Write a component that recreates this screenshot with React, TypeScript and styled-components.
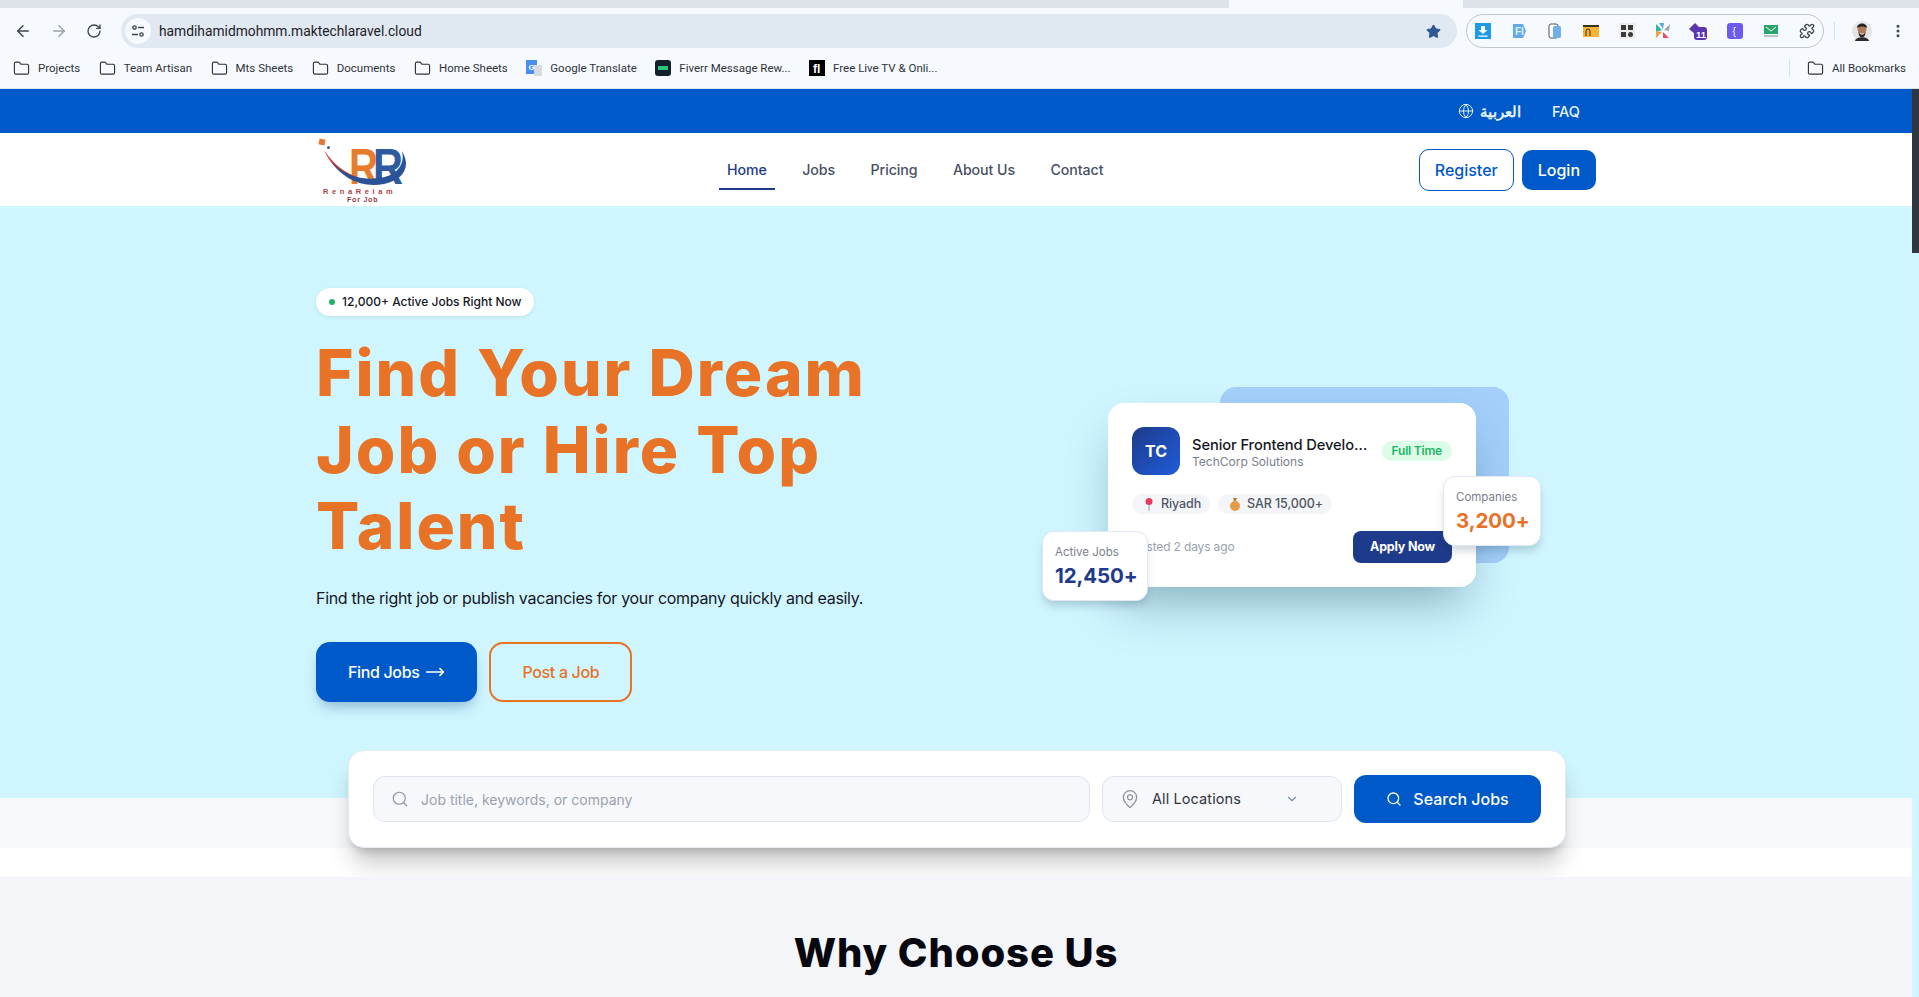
import styled, { createGlobalStyle } from 'styled-components';
import { Search, MapPin, ChevronDown, Globe, ArrowLeft, ArrowRight, MoveRight, RotateCw, Star, MoreVertical, Folder, Puzzle } from 'lucide-react';

const ui = '"Inter", "Noto Sans", sans-serif';
const head = '"Inter", "Open Sans", sans-serif';
const chrome = '"Roboto", "Liberation Sans", sans-serif';

const GlobalStyle = createGlobalStyle`
  html, body { margin: 0; height: 100%; overflow: hidden; background: #fff; }
  * { box-sizing: border-box; }
`;

const Screen = styled.div`
  height: 997px;
  display: flex;
  flex-direction: column;
  overflow: hidden;
`;

/* browser chrome */
const TabStrip = styled.div`
  height: 8px;
  flex: none;
  background: #dee3ea;
  display: flex;
`;
const TabGap = styled.div`
  width: 234px;
  margin-left: 1229px;
  background: #f6f9fe;
`;
const Toolbar = styled.div`
  height: 44px;
  flex: none;
  background: #f6f9fe;
  display: flex;
  align-items: center;
  padding: 2px 0 0 14px;
  color: #3f4650;
`;
const NavIcon = styled.span<{ $dim?: boolean }>`
  width: 18px;
  margin-right: 18px;
  display: flex;
  color: ${(p) => (p.$dim ? '#9aa1aa' : '#3f4650')};
`;
const AddressBar = styled.div`
  width: 1336px;
  margin-left: -1px;
  height: 34px;
  border-radius: 17px;
  background: #e0e9f2;
  display: flex;
  align-items: center;
  padding: 0 16px 0 4px;
  font: 400 13.8px ${chrome};
  color: #1d2026;
`;
const SiteInfo = styled.span`
  width: 26px;
  height: 26px;
  border-radius: 50%;
  background: #f6f9fe;
  display: flex;
  align-items: center;
  justify-content: center;
  margin-right: 8px;
`;
const Url = styled.span`
  flex: 1;
`;
const ExtPill = styled.div`
  width: 358px;
  height: 34px;
  margin-left: 9px;
  border: 1px solid #c1c5cc;
  border-radius: 17px;
  display: flex;
  align-items: center;
`;
const ExtSlot = styled.span`
  width: 36px;
  flex: none;
  display: flex;
  justify-content: center;
  &:first-child {
    margin-left: -2px;
  }
`;
const ToolSep = styled.span`
  width: 1px;
  height: 18px;
  background: #c8e8f2;
  margin-left: 10px;
  margin-right: 17px;
`;
const Avatar = styled.span`
  width: 20px;
  height: 20px;
  display: flex;
  margin-right: 18px;
`;
const BookmarkBar = styled.div`
  height: 37px;
  flex: none;
  background: #f6f9fe;
  border-bottom: 1px solid #dbe3ea;
  display: flex;
  align-items: center;
  padding: 0 13px 4px 13px;
  font: 400 11.5px ${chrome};
  color: #30343a;
  gap: 18.5px;
`;
const Bookmark = styled.span`
  display: flex;
  align-items: center;
  gap: 8px;
  white-space: nowrap;
`;
const BookmarkEnd = styled.div`
  margin-left: auto;
  display: flex;
  align-items: center;
  gap: 17px;
`;
const BarSep = styled.span`
  width: 1px;
  height: 18px;
  background: #c8e8f2;
`;

/* page */
const Viewport = styled.div`
  flex: 1;
  min-height: 0;
  display: flex;
  font-family: ${ui};
`;
const Page = styled.div`
  flex: 1;
  min-width: 0;
  display: flex;
  flex-direction: column;
`;
const ScrollTrack = styled.div`
  width: 7px;
  flex: none;
  background: #d0f5ff;
`;
const ScrollThumb = styled.div`
  height: 164px;
  background: #2f3640;
`;
const TopBar = styled.div`
  height: 44px;
  flex: none;
  background: #0059c9;
  color: #e4f2ff;
  display: flex;
  justify-content: center;
`;
const Container = styled.div`
  width: 1280px;
`;
const TopBarInner = styled(Container)`
  display: flex;
  justify-content: flex-end;
  align-items: center;
  gap: 31px;
  padding-right: 16px;
  font-size: 14.5px;
  font-weight: 500;
`;
const LangLink = styled.span`
  display: flex;
  align-items: center;
  gap: 6px;
  font-weight: 600;
`;
const NavBar = styled.div`
  height: 73px;
  flex: none;
  background: #fff;
  display: flex;
  justify-content: center;
`;
const NavInner = styled(Container)`
  display: flex;
  align-items: center;
  position: relative;
`;
const NavLinks = styled.nav`
  display: flex;
  gap: 19.5px;
  margin-left: 311px;
`;
const NavLink = styled.span<{ $active?: boolean }>`
  height: 38px;
  margin-top: 2px;
  padding: 0 8px;
  display: flex;
  align-items: center;
  font-size: 14.2px;
  font-weight: 500;
  letter-spacing: -0.08px;
  color: ${(p) => (p.$active ? '#1e3a8a' : '#475064')};
  border-bottom: 2px solid ${(p) => (p.$active ? '#1e3a8a' : 'transparent')};
`;
const NavActions = styled.div`
  margin-left: auto;
  display: flex;
  align-items: center;
  gap: 8px;
`;
const NavButton = styled.span<{ $filled?: boolean }>`
  height: ${(p) => (p.$filled ? '40px' : '42px')};
  padding: 0 ${(p) => (p.$filled ? '16px' : '15px')};
  border-radius: 10px;
  display: flex;
  align-items: center;
  font-size: 16px;
  font-weight: 500;
  color: ${(p) => (p.$filled ? '#fff' : '#0059c9')};
  background: ${(p) => (p.$filled ? '#0059c9' : '#fff')};
  border: ${(p) => (p.$filled ? 'none' : '1px solid #0059c9')};
`;

/* hero */
const Hero = styled.section`
  background: #cff5ff;
  padding: 82px 0 96px;
  display: flex;
  justify-content: center;
  flex: none;
`;
const HeroGrid = styled(Container)`
  display: grid;
  grid-template-columns: 1fr 1fr;
  gap: 64px;
  align-items: center;
`;
const Pill = styled.div`
  display: flex;
  width: fit-content;
  align-items: center;
  height: 28px;
  padding: 0 12px 1px 13px;
  gap: 7px;
  border-radius: 14px;
  background: #fff;
  box-shadow: 0 1px 4px rgba(0, 0, 0, 0.08);
  font-size: 12px;
  font-weight: 500;
  color: #14171f;
`;
const Dot = styled.span`
  width: 6px;
  height: 6px;
  border-radius: 50%;
  background: #22b566;
`;
const Title = styled.h1`
  margin: 19px 0 0;
  font: 800 64px/76.5px ${head};
  letter-spacing: 2px;
  color: #e87225;
`;
const Lead = styled.p`
  margin: 20px 0 0;
  font-size: 16px;
  line-height: 26px;
  letter-spacing: -0.3px;
  color: #14171f;
`;
const Actions = styled.div`
  margin-top: 31px;
  display: flex;
  gap: 12px;
`;
const CtaButton = styled.span<{ $outline?: boolean }>`
  height: 60px;
  padding: 0 ${(p) => (p.$outline ? '31px' : '32px')};
  border-radius: 14px;
  display: flex;
  align-items: center;
  gap: 6px;
  font-size: 16px;
  font-weight: 500;
  letter-spacing: -0.35px;
  color: ${(p) => (p.$outline ? '#e87225' : '#fff')};
  background: ${(p) => (p.$outline ? 'transparent' : '#0059c9')};
  border: ${(p) => (p.$outline ? '2px solid #e87225' : 'none')};
  box-shadow: ${(p) => (p.$outline ? 'none' : '0 8px 14px -4px rgba(0, 60, 120, 0.35)')};
`;
const Visual = styled.div`
  display: flex;
  justify-content: center;
`;
const CardStage = styled.div`
  width: 368px;
  position: relative;
`;
const BackPanel = styled.div`
  position: absolute;
  top: -16px;
  left: 112px;
  width: 289px;
  height: 176px;
  border-radius: 16px;
  background: #a3cffa;
`;
const JobCard = styled.div`
  position: relative;
  height: 184px;
  padding: 24px;
  border-radius: 16px;
  background: #fff;
  box-shadow: 0 25px 50px -12px rgba(0, 50, 70, 0.38);
`;
const CardHead = styled.div`
  display: flex;
  align-items: center;
`;
const CompanyLogo = styled.div`
  width: 48px;
  height: 48px;
  flex: none;
  border-radius: 12px;
  background: linear-gradient(135deg, #1e3a8a, #1f5cdb);
  color: #fff;
  font-size: 16px;
  font-weight: 700;
  display: flex;
  align-items: center;
  justify-content: center;
`;
const JobText = styled.div`
  width: 177px;
  margin-left: 12px;
  padding-top: 4px;
`;
const JobTitle = styled.div`
  font-size: 14.7px;
  line-height: 18px;
  font-weight: 500;
  letter-spacing: -0.1px;
  color: #14171f;
  white-space: nowrap;
  overflow: hidden;
  text-overflow: ellipsis;
`;
const JobCompany = styled.div`
  font-size: 12px;
  line-height: 16px;
  color: #7a808c;
`;
const TypeBadge = styled.span`
  margin-left: auto;
  height: 20px;
  padding: 0 10px;
  border-radius: 10px;
  background: #dcfce7;
  color: #22b566;
  font-size: 12px;
  font-weight: 600;
  letter-spacing: -0.2px;
  white-space: nowrap;
  display: flex;
  align-items: center;
`;
const Tags = styled.div`
  display: flex;
  gap: 8px;
  margin-top: 19px;
`;
const Tag = styled.span`
  height: 20px;
  padding: 0 9px 0 10px;
  border-radius: 10px;
  background: #f3f5f9;
  color: #4f5563;
  font-size: 12.5px;
  font-weight: 500;
  letter-spacing: -0.1px;
  display: flex;
  align-items: center;
  gap: 5px;
`;
const CardFoot = styled.div`
  display: flex;
  align-items: center;
  justify-content: space-between;
  margin-top: 17px;
`;
const Posted = styled.span`
  font-size: 12px;
  letter-spacing: -0.15px;
  color: #9ba1ad;
`;
const ApplyButton = styled.span`
  height: 32px;
  width: 99px;
  border-radius: 8px;
  background: #1e3a8a;
  color: #fff;
  font-size: 12.5px;
  font-weight: 700;
  letter-spacing: -0.2px;
  display: flex;
  align-items: center;
  justify-content: center;
`;
const StatCard = styled.div<{ $side: 'left' | 'right' }>`
  position: absolute;
  ${(p) => (p.$side === 'left' ? 'left: -66px; top: 128px; width: 106px;' : 'right: -65px; top: 73px; width: 98px;')}
  height: 70px;
  padding: 13px 12px;
  border-radius: 12px;
  background: #fff;
  border: 1px solid #e3e8f2;
  box-shadow: 0 6px 10px -2px rgba(0, 40, 60, 0.22);
`;
const StatLabel = styled.div`
  font-size: 11.5px;
  line-height: 15px;
  color: #7a808c;
`;
const StatValue = styled.div<{ $orange?: boolean }>`
  margin-top: 3px;
  font-size: 20.5px;
  line-height: 26px;
  font-weight: 700;
  letter-spacing: -0.1px;
  white-space: nowrap;
  color: ${(p) => (p.$orange ? '#e87225' : '#1e3a8a')};
`;

/* search */
const SearchBand = styled.div`
  height: 50px;
  flex: none;
  background: #f8f9fd;
`;
const WhiteBand = styled.div`
  height: 29px;
  flex: none;
  background: #fff;
`;
const SearchHolder = styled.div`
  position: relative;
  height: 0;
  flex: none;
  display: flex;
  justify-content: center;
`;
const SearchCard = styled.div`
  width: 1218px;
  height: 98px;
  margin: -48px 0 0 2px;
  padding: 24px;
  display: flex;
  align-items: center;
  gap: 12px;
  border-radius: 16px;
  background: #fff;
  border: 1px solid #e6ebf2;
  box-shadow: 0 20px 25px -5px rgba(0, 0, 0, 0.22), 0 8px 10px -6px rgba(0, 0, 0, 0.2);
`;
const Field = styled.div<{ $grow?: boolean }>`
  height: 46px;
  ${(p) => (p.$grow ? 'flex: 1;' : 'width: 240px;')}
  padding: 0 16px 0 17px;
  border-radius: 12px;
  background: #f6f8fc;
  border: 1px solid #dfe6f0;
  display: flex;
  align-items: center;
  gap: 12px;
  font-size: 14px;
`;
const Placeholder = styled.span`
  color: #9ba1ad;
  padding-top: 2px;
`;
const SelectValue = styled.span`
  flex: 1;
  font-size: 14.5px;
  letter-spacing: 0.1px;
  color: #30343a;
`;
const SelectCaret = styled.span`
  display: flex;
  margin-right: 26px;
`;
const SearchButton = styled.span`
  width: 187px;
  height: 48px;
  flex: none;
  border-radius: 12px;
  background: #0059c9;
  color: #fff;
  font-size: 16px;
  font-weight: 500;
  display: flex;
  align-items: center;
  justify-content: center;
  gap: 11px;
`;

/* why choose us */
const WhySection = styled.section`
  position: relative;
  flex: 1;
  background: #f3f5f9;
  padding-top: 48px;
  text-align: center;
`;
const WhyTitle = styled.h2`
  margin: 0;
  font: 800 40px/56px ${head};
  letter-spacing: 0.9px;
  color: #07070f;
`;

const bookmarks = ['Projects', 'Team Artisan', 'Mts Sheets', 'Documents', 'Home Sheets'];

function Logo() {
  return (
    <svg width="92" height="72" viewBox="16 8 92 72">
      <rect x="19" y="13" width="6" height="6" fill="#e8772e" transform="rotate(12 22 16)" />
      <circle cx="28.500" cy="21.500" r="1.500" fill="#2f5fa8" />
      <text x="49" y="58" fontFamily="Liberation Sans" fontWeight="700" fontSize="50" fill="#e87c2d" textLength="29" lengthAdjust="spacingAndGlyphs">R</text>
      <text x="73" y="58" fontFamily="Liberation Sans" fontWeight="700" fontSize="50" fill="#2f5a9e" textLength="30" lengthAdjust="spacingAndGlyphs">R</text>
      <path d="M24 24 C36 42 50 50 70 55 C52 57 34 46 24 24Z" fill="#d8403a" />
      <path d="M30 34 C42 52 60 62 84 58 C102 54 112 42 102 25 C106 42 92 51 78 52 C60 55 42 48 30 34Z" fill="#2a5298" />
      <text x="23" y="68" fontFamily="Liberation Sans" fontWeight="700" fontSize="7.500" fill="#a8434a" letterSpacing="3.600">RenaReiam</text>
      <text x="47" y="76" fontFamily="Liberation Sans" fontWeight="700" fontSize="7" fill="#8f3a40" letterSpacing="0.8">For Job</text>
    </svg>
  );
}

function Extensions() {
  return (
    <>
      <ExtSlot>
        <svg width="16" height="16" viewBox="0 0 16 16"><rect width="16" height="16" fill="#1e9be8" /><path d="M6 3h4v4h2.500L8 11 3.500 7H6zM3.500 12.500h9v1.200h-9z" fill="#fff" /></svg>
      </ExtSlot>
      <ExtSlot>
        <svg width="16" height="16" viewBox="0 0 16 16"><path d="M2 1h10l3 7-3 7H2z" fill="#62a9ea" /><text x="4" y="12" fontSize="10" fontFamily="Liberation Sans" fontWeight="700" fill="#dff0ff">FI</text></svg>
      </ExtSlot>
      <ExtSlot>
        <svg width="14" height="16" viewBox="0 0 14 16"><rect x="1" y="1" width="9" height="14" rx="2" fill="#fff" stroke="#4a5360" /><rect x="5" y="3" width="8" height="12" rx="1.500" fill="#6fb0ec" /></svg>
      </ExtSlot>
      <ExtSlot>
        <svg width="16" height="12" viewBox="0 0 16 12"><rect width="16" height="12" fill="#f6b436" /><rect width="16" height="2" fill="#3a3020" /><path d="M3 11V6a2 2 0 0 1 4 0v5" fill="none" stroke="#3a3020" /></svg>
      </ExtSlot>
      <ExtSlot>
        <svg width="16" height="16" viewBox="0 0 16 16"><rect width="16" height="16" fill="#ececec" /><path d="M2 2h5v5H2zM9 2h5v5H9zM2 9h5v5H2z" fill="#3a3a3a" /><circle cx="11.500" cy="11.500" r="2.500" fill="#3a3a3a" /></svg>
      </ExtSlot>
      <ExtSlot>
        <svg width="16" height="16" viewBox="0 0 16 16"><path d="M1 1l6 6-6 2z" fill="#2fb5a5" /><path d="M4 0h5L8 6z" fill="#5aa8e8" /><path d="M15 1l-6 6 5 1z" fill="#a0a6b0" /><path d="M1 15l6-6-6-1z" fill="#f2a23a" /><path d="M8 9l6 6H8z" fill="#e84a6a" /></svg>
      </ExtSlot>
      <ExtSlot>
        <svg width="22" height="18" viewBox="0 0 22 18"><path d="M1 7l6-6 6 6-6 5z" fill="#5b34b0" /><rect x="6" y="5" width="13" height="13" rx="3" fill="#5b34b0" /><text x="8" y="15.500" fontSize="9.500" fontFamily="Liberation Sans" fontWeight="700" fill="#fff">11</text></svg>
      </ExtSlot>
      <ExtSlot>
        <svg width="16" height="16" viewBox="0 0 16 16"><rect width="16" height="16" rx="3" fill="#6d5af0" /><text x="5.500" y="12" fontSize="10" fontFamily="Liberation Sans" fill="#fff">{'{'}</text></svg>
      </ExtSlot>
      <ExtSlot>
        <svg width="14" height="12" viewBox="0 0 14 12"><rect width="14" height="9" fill="#2aa56a" /><path d="M2 2l5 4 5-4" fill="none" stroke="#fff" /><rect y="10" width="14" height="2" fill="#b8c4c0" /></svg>
      </ExtSlot>
      <ExtSlot>
        <Puzzle size={16} color="#3f4650" strokeWidth={2} />
      </ExtSlot>
    </>
  );
}

export default function App() {
  return (
    <Screen>
      <GlobalStyle />
      <TabStrip>
        <TabGap />
      </TabStrip>
      <Toolbar>
        <NavIcon><ArrowLeft size={18} /></NavIcon>
        <NavIcon $dim><ArrowRight size={18} /></NavIcon>
        <NavIcon><RotateCw size={16} /></NavIcon>
        <AddressBar>
          <SiteInfo>
            <svg width="14" height="14" viewBox="0 0 14 14" fill="none" stroke="#3f4650" strokeWidth="1.300">
              <circle cx="3.500" cy="3.500" r="1.700" /><path d="M7 3.500h6M1 10.500h6" /><circle cx="10.500" cy="10.500" r="1.700" />
            </svg>
          </SiteInfo>
          <Url>hamdihamidmohmm.maktechlaravel.cloud</Url>
          <Star size={15} fill="#2d5a94" color="#2d5a94" />
        </AddressBar>
        <ExtPill>
          <Extensions />
        </ExtPill>
        <ToolSep />
        <Avatar>
          <svg width="20" height="20" viewBox="0 0 20 20">
            <circle cx="10" cy="10" r="10" fill="#e4e4e4" />
            <circle cx="10" cy="8" r="4.500" fill="#b07a56" />
            <path d="M5 7c0-6 10-6 10 0-3-2-7-2-10 0z" fill="#222" />
            <path d="M6.500 10c1 5 6 5 7 0 0 6-2 6-3.500 6s-3.500 0-3.500-6z" fill="#2b2320" />
            <path d="M3 20c1-5 13-5 14 0z" fill="#2a2a30" />
          </svg>
        </Avatar>
        <MoreVertical size={16} color="#3f4650" strokeWidth={2.500} />
      </Toolbar>
      <BookmarkBar>
        {bookmarks.map((name) => (
          <Bookmark key={name}><Folder size={17} strokeWidth={1.600} />{name}</Bookmark>
        ))}
        <Bookmark>
          <svg width="16" height="16" viewBox="0 0 16 16"><rect width="11" height="14" fill="#4a8ef0" /><rect x="8" y="5" width="8" height="11" fill="#d8dbe0" /><text x="2.500" y="10" fontSize="8" fontFamily="Liberation Sans" fontWeight="700" fill="#fff">G</text></svg>
          Google Translate
        </Bookmark>
        <Bookmark>
          <svg width="16" height="16" viewBox="0 0 16 16"><rect width="16" height="16" rx="3" fill="#14202a" /><rect x="3" y="6" width="10" height="4" fill="#2fc47a" /></svg>
          Fiverr Message Rew...
        </Bookmark>
        <Bookmark>
          <svg width="16" height="16" viewBox="0 0 16 16"><rect width="16" height="16" fill="#000" /><text x="4" y="13" fontSize="12" fontFamily="Liberation Sans" fontWeight="700" fill="#fff">fl</text></svg>
          Free Live TV &amp; Onli...
        </Bookmark>
        <BookmarkEnd>
          <BarSep />
          <Bookmark><Folder size={17} strokeWidth={1.600} />All Bookmarks</Bookmark>
        </BookmarkEnd>
      </BookmarkBar>
      <Viewport>
        <Page>
          <TopBar>
            <TopBarInner>
              <LangLink><Globe size={16} strokeWidth={1.500} />العربية</LangLink>
              <span>FAQ</span>
            </TopBarInner>
          </TopBar>
          <NavBar>
            <NavInner>
              <Logo />
              <NavLinks>
                <NavLink $active>Home</NavLink>
                <NavLink>Jobs</NavLink>
                <NavLink>Pricing</NavLink>
                <NavLink>About Us</NavLink>
                <NavLink>Contact</NavLink>
              </NavLinks>
              <NavActions>
                <NavButton>Register</NavButton>
                <NavButton $filled>Login</NavButton>
              </NavActions>
            </NavInner>
          </NavBar>
          <Hero>
            <HeroGrid>
              <div>
                <Pill><Dot />12,000+ Active Jobs Right Now</Pill>
                <Title>Find Your Dream<br />Job or Hire Top<br />Talent</Title>
                <Lead>Find the right job or publish vacancies for your company quickly and easily.</Lead>
                <Actions>
                  <CtaButton>Find Jobs <MoveRight size={20} /></CtaButton>
                  <CtaButton $outline>Post a Job</CtaButton>
                </Actions>
              </div>
              <Visual>
                <CardStage>
                  <BackPanel />
                  <JobCard>
                    <CardHead>
                      <CompanyLogo>TC</CompanyLogo>
                      <JobText>
                        <JobTitle>Senior Frontend Developer</JobTitle>
                        <JobCompany>TechCorp Solutions</JobCompany>
                      </JobText>
                      <TypeBadge>Full Time</TypeBadge>
                    </CardHead>
                    <Tags>
                      <Tag>
                        <svg width="14" height="14" viewBox="0 0 14 14"><circle cx="7" cy="4.500" r="3.500" fill="#e83a5e" /><path d="M7 8v6" stroke="#9aa1aa" /></svg>
                        Riyadh
                      </Tag>
                      <Tag>
                        <svg width="14" height="14" viewBox="0 0 14 14"><circle cx="7" cy="9" r="5" fill="#e89a4a" /><path d="M5 1h4L8 4H6z" fill="#c9762e" /></svg>
                        SAR 15,000+
                      </Tag>
                    </Tags>
                    <CardFoot>
                      <Posted>Posted 2 days ago</Posted>
                      <ApplyButton>Apply Now</ApplyButton>
                    </CardFoot>
                  </JobCard>
                  <StatCard $side="left">
                    <StatLabel>Active Jobs</StatLabel>
                    <StatValue>12,450+</StatValue>
                  </StatCard>
                  <StatCard $side="right">
                    <StatLabel>Companies</StatLabel>
                    <StatValue $orange>3,200+</StatValue>
                  </StatCard>
                </CardStage>
              </Visual>
            </HeroGrid>
          </Hero>
          <SearchHolder>
            <SearchCard>
              <Field $grow>
                <Search size={18} color="#8d939e" strokeWidth={1.500} />
                <Placeholder>Job title, keywords, or company</Placeholder>
              </Field>
              <Field>
                <MapPin size={20} color="#8d939e" strokeWidth={1.500} />
                <SelectValue>All Locations</SelectValue>
                <SelectCaret><ChevronDown size={14} color="#7f8ba0" /></SelectCaret>
              </Field>
              <SearchButton><Search size={16} />Search Jobs</SearchButton>
            </SearchCard>
          </SearchHolder>
          <SearchBand />
          <WhiteBand />
          <WhySection>
            <WhyTitle>Why Choose Us</WhyTitle>
          </WhySection>
        </Page>
        <ScrollTrack>
          <ScrollThumb />
        </ScrollTrack>
      </Viewport>
    </Screen>
  );
}
